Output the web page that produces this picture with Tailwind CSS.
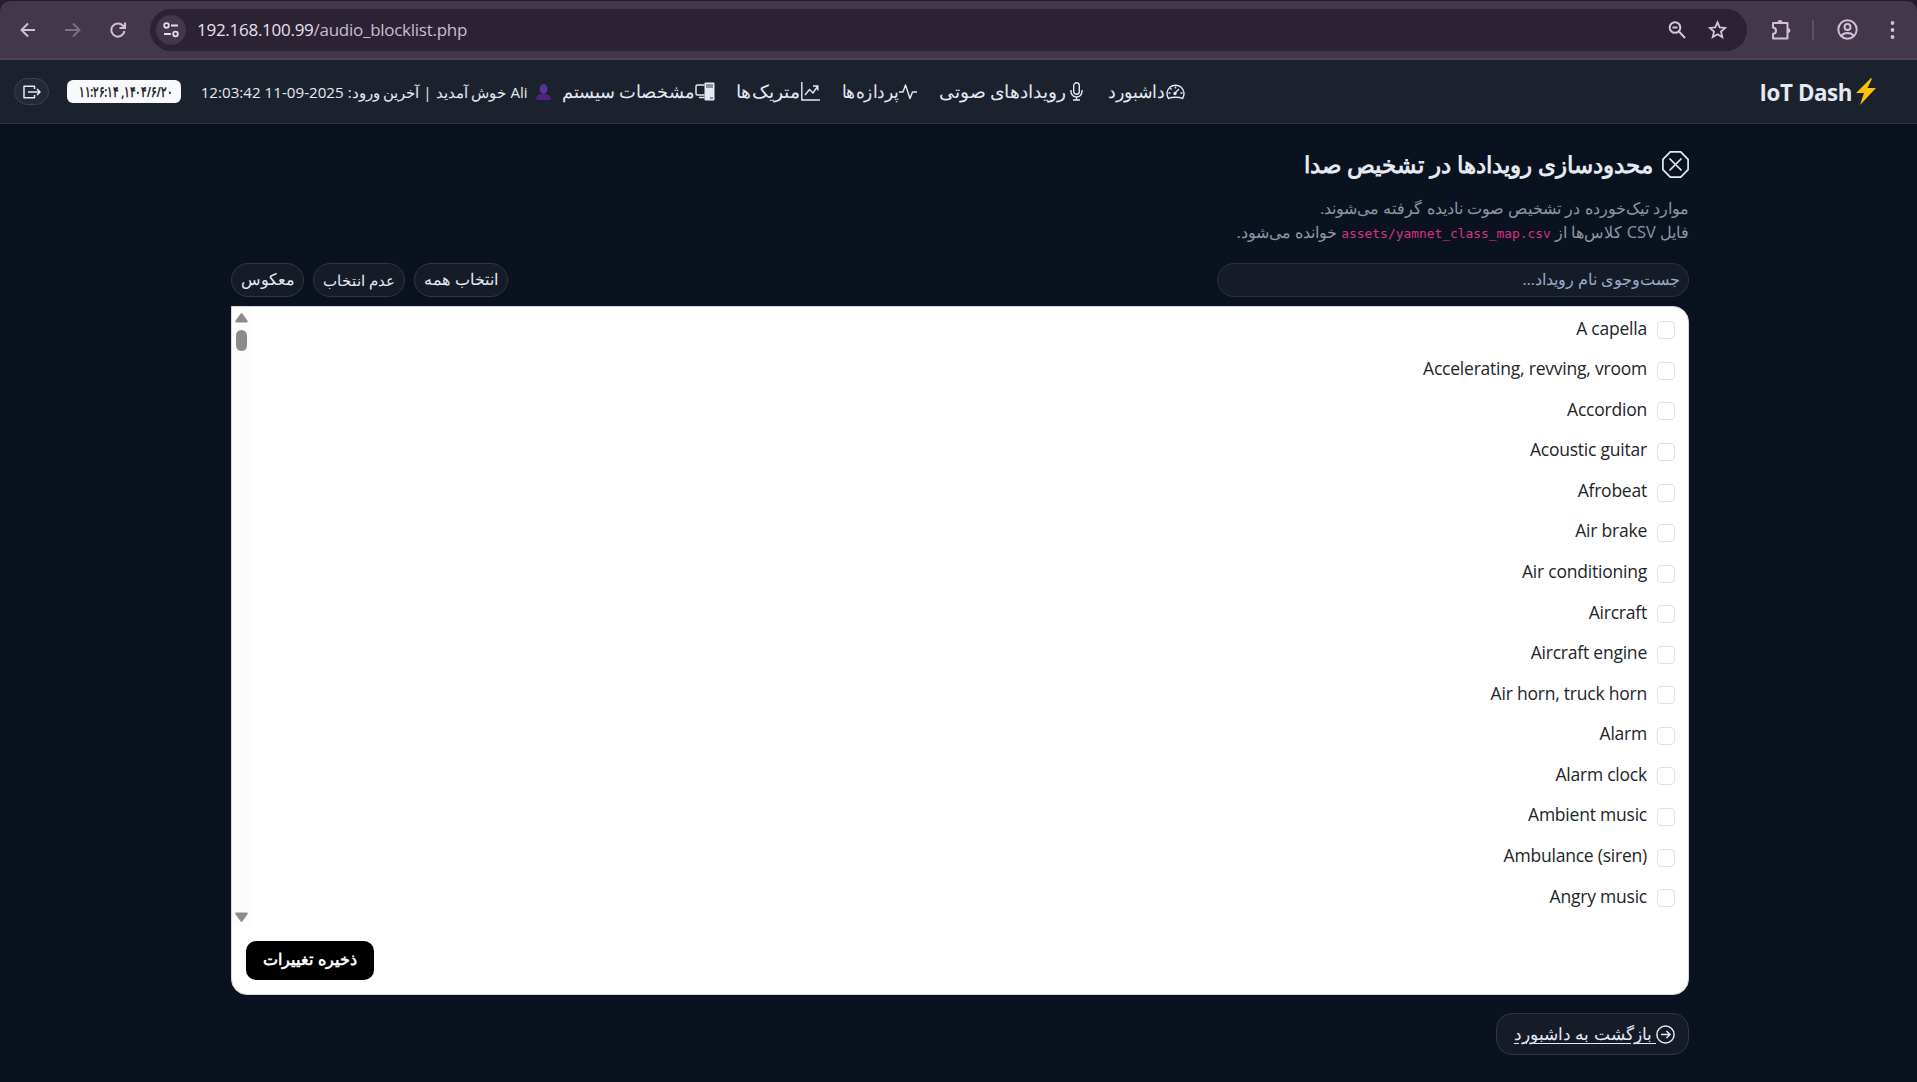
<!DOCTYPE html>
<html lang="fa" dir="rtl">
<head>
<meta charset="utf-8">
<title>IoT Dash</title>
<script src="https://cdn.jsdelivr.net/npm/@tailwindcss/browser@4"></script>
</head>
<body class="h-[1082px] overflow-hidden bg-[#0b121f] font-['Open_Sans','Noto_Sans',sans-serif] text-[#e5e9f2]">

<!-- Browser toolbar -->
<div dir="ltr" class="h-[60px] bg-[#251b2d] pt-px">
  <div class="flex h-[59px] items-center rounded-t-[10px] border-b-2 border-[#4c444f] bg-[#43384a] text-[#d3bfdc]">
    <svg class="ml-[20px] size-[16px] shrink-0" viewBox="0 0 16 16" fill="none" stroke="currentColor" stroke-width="2"><path d="M15 8H2M8 1.5 1.5 8 8 14.500"/></svg>
    <svg class="ml-[29px] size-[16px] shrink-0 text-[#7d7084]" viewBox="0 0 16 16" fill="none" stroke="currentColor" stroke-width="2"><path d="M0 8h14M8 1.500 14.500 8 8 14.500"/></svg>
    <svg class="ml-[29px] size-[16px] shrink-0" viewBox="0 0 16 16" fill="none" stroke="currentColor" stroke-width="2"><path d="M14.500 9A6.600 6.600 0 1 1 12.800 3.500L14.500 5.500M15 .5v5.500H9.500"/></svg>
    <div class="ml-[24px] flex h-[42px] w-[1597px] shrink-0 items-center rounded-full bg-[#2b2233] pl-[6px]">
      <div class="flex size-[30px] items-center justify-center rounded-full bg-[#43384a]">
        <svg class="size-[16px]" viewBox="0 0 16 16" fill="none" stroke="#e6dcea" stroke-width="1.800"><circle cx="3.500" cy="3.500" r="2.300"/><path d="M8 3.500h7M1 12h7"/><circle cx="12.500" cy="12" r="2.300"/></svg>
      </div>
      <div class="ml-[11px] mt-px text-[17px] tracking-[-0.27px] whitespace-nowrap text-[#e8e0ec]">192.168.100.99<span class="text-[#c9bdd0]">/audio_blocklist.php</span></div>
      <svg class="ml-auto size-[18px]" viewBox="0 0 18 18" fill="none" stroke="#d2c8d6" stroke-width="2"><circle cx="7" cy="6.500" r="5.300"/><path d="m11 10.500 6 6.500M4.500 6.500h5"/></svg>
      <svg class="ml-[22px] mr-[20px] size-[19px]" viewBox="0 0 19 19" fill="none" stroke="#d2c8d6" stroke-width="1.800"><path d="m9.500 2.300 2.200 5.100 5.500.5-4.200 3.700 1.300 5.500-4.800-2.900-4.800 2.900L6 11.600 1.800 7.900l5.500-.5z"/></svg>
    </div>
    <svg class="ml-[23px] size-[22px]" viewBox="0 0 22 22" fill="none" stroke="currentColor" stroke-width="2" stroke-linejoin="round"><path d="M3 4h14.500v15.500H3v-4.500c4-.5 4-6 0-6.500z"/><path d="M7.500 3.500a2.500 2.500 0 0 1 5 0zM18 9a2.500 2.500 0 0 1 0 5z" fill="currentColor" stroke="none"/></svg>
    <div class="ml-[20px] h-[20px] w-[2px] bg-[#5c5163]"></div>
    <svg class="ml-[23px] size-[21px]" viewBox="0 0 21 21" fill="none" stroke="currentColor" stroke-width="1.900"><circle cx="10.500" cy="10.500" r="9.200"/><circle cx="10.500" cy="8" r="3"/><path d="M4 17c3-4 10-4 13 0"/></svg>
    <svg class="ml-[32px] h-[18px] w-[5px]" viewBox="0 0 5 18" fill="currentColor"><circle cx="2.500" cy="2" r="1.900"/><circle cx="2.500" cy="9" r="1.900"/><circle cx="2.500" cy="16" r="1.900"/></svg>
  </div>
</div>

<!-- Site navigation -->
<header class="flex h-[64px] items-center border-b border-[#2c323e] bg-[#1b222d] pr-[41px] pl-[14px] text-[18px] whitespace-nowrap">
  <a class="flex shrink-0 items-center gap-[4px]">
    <svg class="h-[27px] w-[20px]" viewBox="0 0 20 27"><path d="M15 0 0 15h8L4 27 20 10h-8.500L16 .5z" fill="#ffc107"/></svg>
    <span dir="ltr" class="mt-[2px] text-[22.300px] font-bold tracking-[-0.4px]">IoT Dash</span>
  </a>
  <a class="ms-auto flex w-[77px] shrink-0 items-center gap-px">
    <svg class="h-[16px] w-[19px] shrink-0" viewBox="0 0 19 16" fill="none" stroke="currentColor" stroke-width="1.400"><path d="M2.500 14.500a8.500 8.500 0 1 1 14 0c-3-1.600-11-1.600-14 0z"/><path d="M8.500 9.500 13 5M9.500 2.500v2M4.300 4.300l1.300 1.300M2.500 9h2M14.500 9h2"/><circle cx="9" cy="9.500" r="1" fill="currentColor"/></svg>
    <span class="origin-right scale-x-[.965]">داشبورد</span>
  </a>
  <a class="ms-[25px] flex w-[143px] shrink-0 items-center gap-[3px]">
    <svg class="h-[19px] w-[13px] shrink-0" viewBox="0 0 13 19" fill="none" stroke="currentColor" stroke-width="1.400"><rect x="3.700" y=".8" width="5.600" height="11.500" rx="2.800"/><path d="M1 8v1.500a5.500 5.500 0 0 0 11 0V8M6.500 15v3M3 18h7"/></svg>
    <span class="origin-right scale-x-[1.037]">رویدادهای صوتی</span>
  </a>
  <a class="ms-[23px] flex w-[74px] shrink-0 items-center">
    <svg class="h-[18px] w-[18px] shrink-0" viewBox="0 0 18 18" fill="none" stroke="currentColor" stroke-width="1.400" stroke-linejoin="round"><path d="M0 9h4l2.500-7L11 15.500 13.500 9H18"/></svg>
    <span class="origin-right scale-x-[.94]">پردازه‌ها</span>
  </a>
  <a class="ms-[23px] flex w-[83px] shrink-0 items-center gap-px">
    <svg class="h-[19px] w-[19px] shrink-0" viewBox="0 0 19 19" fill="none" stroke="currentColor" stroke-width="1.400"><path d="M.8 0v18H19M4 13l4.500-5.500 3.500 3.500 4.500-6.500M12 4h4.800v4.500"/></svg>
    <span class="origin-right scale-x-[1.045]">متریک‌ها</span>
  </a>
  <a class="ms-[22px] flex w-[152px] shrink-0 items-center">
    <svg class="h-[19px] w-[20px] shrink-0" viewBox="0 0 20 19"><path d="M9.500 3H2.500Q1 3 1 4.500v7Q1 13 2.500 13h7M4 15.500h5.500" fill="none" stroke="currentColor" stroke-width="1.500"/><rect x="9.500" y=".5" width="10" height="18" rx="1" fill="currentColor"/><path d="M11 3h7M11 5h7M15 16h3" stroke="#1b222d" stroke-width=".9"/></svg>
    <span class="origin-right scale-x-[.99]">مشخصات سیستم</span>
  </a>
  <svg class="ms-[12px] h-[16px] w-[15px] shrink-0" viewBox="0 0 15 16"><path d="M0 16c0-4 2-5.500 5-6h5c3 .5 5 2 5 6z" fill="#4a2580"/><ellipse cx="7.500" cy="5" rx="3.900" ry="5" fill="#5b3296"/></svg>
  <div class="ms-[8px] mt-px flex w-[328px] shrink-0 text-[15.200px] font-medium"><span class="origin-right scale-x-[.998]">Ali خوش آمدید | آخرین ورود: 2025-09-11 12:03:42</span></div>
  <div class="ms-[19px] flex h-[23px] w-[114px] shrink-0 items-center rounded-[6px] bg-[#f8f9fa] pr-[9px] text-[15px] font-bold text-[#212529]"><span class="origin-right scale-x-[.7]">۱۴۰۴/۶/۲۰, ۱۱:۲۶:۱۴</span></div>
  <a class="ms-[18px] flex h-[27px] w-[35px] shrink-0 items-center justify-center rounded-full border border-[#3a414d] bg-[#232a36]">
    <svg class="h-[14px] w-[18px]" viewBox="0 0 18 14" fill="none" stroke="currentColor" stroke-width="1.500" stroke-linejoin="round"><path d="M11.500 4V1.200H1v11.600h10.500V10M5 7h12M14 4l3 3-3 3"/></svg>
  </a>
</header>

<main class="pt-[27px] pr-[228px] pl-[231px]">
  <h1 class="flex h-[27px] items-center gap-[9px] text-[22.600px] leading-[27px] font-bold">
    <svg class="size-[27px]" viewBox="0 0 27 27" fill="none" stroke="currentColor" stroke-width="1.700"><path d="M8.300.9h10.400l7.400 7.400v10.400l-7.400 7.400H8.300L.9 18.700V8.300zM7.500 7.500l12 12M19.500 7.500l-12 12"/></svg>
    محدودسازی رویدادها در تشخیص صدا
  </h1>
  <p class="mt-[18px] h-[48px] text-[16.400px] leading-[24px] text-[#8c96a5]">موارد تیک‌خورده در تشخیص صوت نادیده گرفته می‌شوند.<br>فایل CSV کلاس‌ها از <code dir="ltr" class="font-['DejaVu_Sans_Mono',monospace] text-[12.900px] text-[#d63384]">assets/yamnet_class_map.csv</code> خوانده می‌شود.</p>

  <div class="mt-[19px] flex h-[34px] items-center justify-between">
    <div class="flex h-[34px] w-[472px] items-center rounded-[17px] border border-[#2a313d] bg-[#151c28] pr-[8px] text-[15.600px] text-[#9aabca]">جست‌وجوی نام رویداد...</div>
    <div class="flex gap-[9px] text-[15.800px]">
      <button class="h-[34px] w-[94px] rounded-[17px] border border-[#2f3642] bg-[#151c28] whitespace-nowrap">انتخاب همه</button>
      <button class="h-[34px] w-[92px] rounded-[17px] border border-[#2f3642] bg-[#151c28] text-[15.300px] whitespace-nowrap">عدم انتخاب</button>
      <button class="h-[34px] w-[73px] rounded-[17px] border border-[#2f3642] bg-[#151c28] whitespace-nowrap">معکوس</button>
    </div>
  </div>

  <section class="mt-[9px] h-[689px] rounded-[16px] rounded-tl-none border border-[#d5d7da] bg-white text-[#212529]">
    <div class="flex h-[620px] justify-between">
      <ul id="classes" class="pt-[3px] pr-[13px] text-[17.500px] tracking-[-0.22px]"></ul>
      <div class="flex w-[19px] flex-col items-center bg-[#fcfcfc] pt-[6px] pb-[5px]">
        <svg class="h-[10px] w-[13px]" viewBox="0 0 13 10"><path d="M5.500.8q1-1.300 2 0l5 7q.8 1.700-1 1.700h-10q-1.800 0-1-1.700z" fill="#8b8b8b"/></svg>
        <div class="mt-[7px] h-[21px] w-[11px] rounded-full bg-[#8b8b8b]"></div>
        <svg class="mt-auto h-[10px] w-[13px]" viewBox="0 0 13 10"><path d="M5.500 9.200q1 1.300 2 0l5-7q.8-1.700-1-1.700h-10q-1.800 0-1 1.700z" fill="#8b8b8b"/></svg>
      </div>
    </div>
    <div class="flex justify-end pt-[14px] pl-[14px]">
      <button class="flex h-[39px] w-[128px] items-center justify-center rounded-[10px] bg-black pb-px text-[15.700px] font-bold text-white">ذخیره تغییرات</button>
    </div>
  </section>

  <a class="mt-[18px] flex h-[42px] w-[193px] items-center rounded-[16px] border border-[#2f3642] bg-[#151c28] pr-[13px] text-[17px] whitespace-nowrap">
    <svg class="size-[19px] shrink-0" viewBox="0 0 19 19" fill="none" stroke="currentColor" stroke-width="1.500"><circle cx="9.500" cy="9.500" r="8.600"/><path d="M5 9.500h9M10.500 6l3.500 3.500-3.500 3.500"/></svg>
    <span class="underline underline-offset-[3px]">&nbsp;بازگشت به داشبورد</span>
  </a>
</main>

<script>
const names = ["A capella","Accelerating, revving, vroom","Accordion","Acoustic guitar","Afrobeat","Air brake","Air conditioning","Aircraft","Aircraft engine","Air horn, truck horn","Alarm","Alarm clock","Ambient music","Ambulance (siren)","Angry music"];
document.getElementById('classes').innerHTML = names.map(n => `<li class="flex h-[40.570px] items-center gap-[10px]"><span class="size-[18px] rounded-[4px] border border-[#dee2e6]"></span><bdi class="mb-[5px]">${n}</bdi></li>`).join('');
</script>
</body>
</html>
